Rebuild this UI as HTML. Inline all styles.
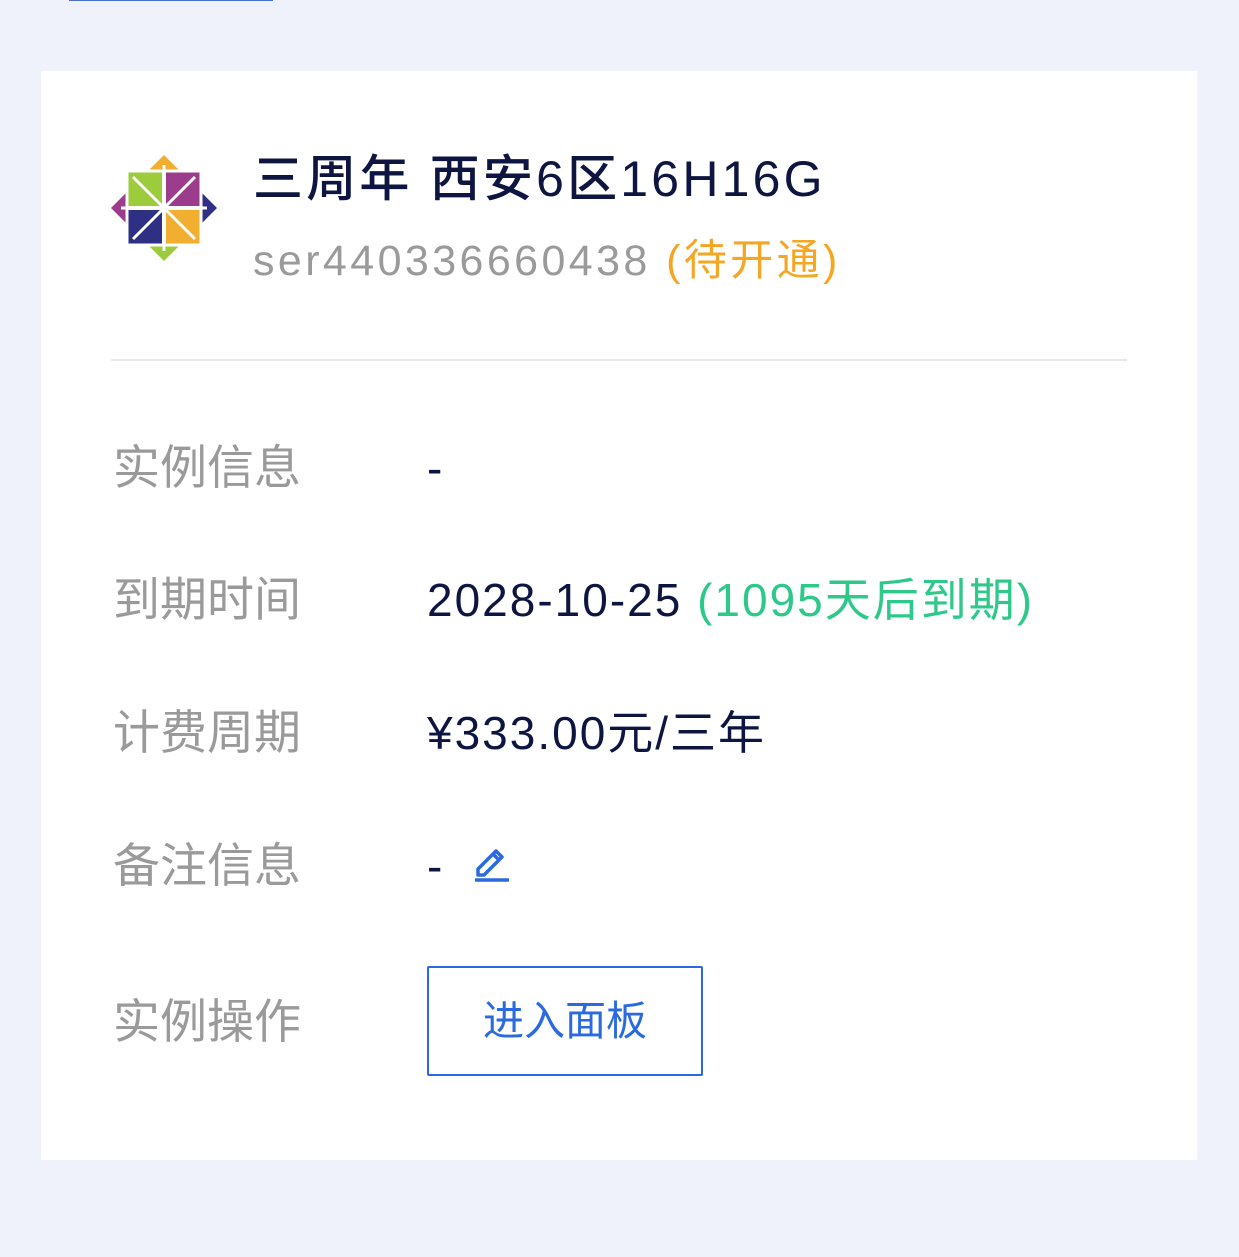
<!DOCTYPE html>
<html><head><meta charset="utf-8"><style>
body{margin:0;width:1239px;height:1257px;background:#eff2fa;font-family:"Liberation Sans","Noto Sans CJK SC",sans-serif;position:relative;overflow:hidden}
.topbar{position:absolute;left:69px;top:0;width:204px;height:1px;background:#4a6fd0}
.card{position:absolute;left:41px;top:71px;width:1156px;height:1089px;background:#fff}
.abs{position:absolute;white-space:nowrap}
.title{left:212px;top:76px;font-size:50px;color:#0d1540;font-weight:500;line-height:64px;letter-spacing:3.2px}
.sub{left:212px;top:162px;font-size:43px;color:#9a9a9a;line-height:56px;letter-spacing:3.4px}
.sub span{color:#f5a623}
.div{position:absolute;left:70px;top:288px;width:1016px;height:2px;background:#e6e6ec}
.lab{left:72px;font-size:47px;color:#9a9a9a;line-height:56px}
.val{left:386px;font-size:46px;color:#0d1540;line-height:56px;letter-spacing:2px}
.green{color:#2ec98a}
.btn{position:absolute;left:386px;top:895px;width:272px;height:106px;border:2px solid #2a6ae0;border-radius:2px;color:#2a6ae0;font-size:41px;line-height:106px;text-align:center}
</style></head><body>
<div class="topbar"></div>
<div class="card">
<svg class="abs" style="left:70px;top:84px" width="106" height="106" viewBox="0 0 106 106">
<rect x="16" y="16" width="35" height="35" fill="#9ccb3b"/>
<rect x="55" y="16" width="35" height="35" fill="#9b3d8c"/>
<rect x="16" y="55" width="35" height="35" fill="#2f2f84"/>
<rect x="55" y="55" width="35" height="35" fill="#f2ae2f"/>
<polygon points="53,0 69,16 37,16" fill="#f2ae2f"/>
<polygon points="106,53 90,69 90,37" fill="#2f2f84"/>
<polygon points="53,106 37,90 69,90" fill="#9ccb3b"/>
<polygon points="0,53 16,37 16,69" fill="#9b3d8c"/>
<g stroke="#fff" stroke-width="3" fill="none">
<line x1="53" y1="10" x2="53" y2="96"/><line x1="10" y1="53" x2="96" y2="53"/>
<line x1="22" y1="22" x2="84" y2="84"/><line x1="84" y1="22" x2="22" y2="84"/>
<rect x="16" y="16" width="74" height="74"/>
</g>
</svg>
<div class="abs title">三周年 西安6区16H16G</div>
<div class="abs sub">ser440336660438 <span>(待开通)</span></div>
<div class="div"></div>
<div class="abs lab" style="top:369px">实例信息</div><div class="abs val" style="top:369px">-</div>
<div class="abs lab" style="top:501px">到期时间</div><div class="abs val" style="top:501px">2028-10-25 <span class="green">(1095天后到期)</span></div>
<div class="abs lab" style="top:634px">计费周期</div><div class="abs val" style="top:634px">¥333.00元/三年</div>
<div class="abs lab" style="top:767px">备注信息</div><div class="abs val" style="top:767px">-</div>
<svg class="abs" style="left:433px;top:772px" width="36" height="40" viewBox="0 0 36 40">
<path d="M4 26 L22 8 L28 14 L10 32 L4 32 Z M19 11 L25 17" stroke="#2a6ae0" stroke-width="3.5" fill="none" stroke-linejoin="round"/>
<line x1="1" y1="37" x2="35" y2="37" stroke="#2a6ae0" stroke-width="3.5"/>
</svg>
<div class="abs lab" style="top:923px">实例操作</div>
<div class="btn">进入面板</div>
</div>
</body></html>
